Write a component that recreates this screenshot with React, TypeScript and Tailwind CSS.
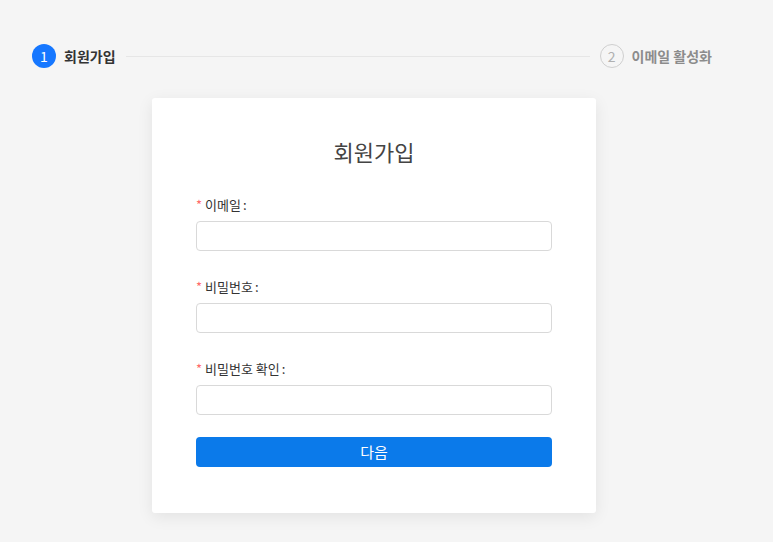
import React from "react";

const fields = [
  { label: "이메일", type: "email" },
  { label: "비밀번호", type: "password" },
  { label: "비밀번호 확인", type: "password" },
];

export default function App() {
  return (
    <div
      className="min-h-[542px] bg-[#f5f5f5] px-8 pt-11"
      style={{ fontFamily: '"Noto Sans CJK KR", "Noto Sans", sans-serif' }}
    >
      {/* steps */}
      <div className="flex items-center h-6">
        <div className="flex items-center flex-1">
          <div className="w-6 h-6 rounded-full bg-[#1677ff] text-white text-[14px] flex items-center justify-center leading-none">
            1
          </div>
          <span className="ml-2 text-[14px] font-bold text-[#333]">회원가입</span>
          <div className="flex-1 h-px bg-[#e6e6e6] mx-[10px]" />
        </div>
        <div className="flex items-center pr-[29px]">
          <div className="w-6 h-6 rounded-full border border-[#cfcfcf] text-[#b0b0b0] text-[14px] flex items-center justify-center leading-none">
            2
          </div>
          <span className="ml-2 text-[14px] font-bold text-[#8c8c8c]">이메일 활성화</span>
        </div>
      </div>

      {/* card */}
      <div className="mt-[30px] ml-[120px] w-[444px] h-[415px] bg-white rounded-[3px] shadow-[0_4px_16px_rgba(0,0,0,0.08)] px-11 pt-[36px]">
        <h1 className="text-center text-[22px] text-[#444] leading-[34px]">회원가입</h1>
        <div className="mt-[27px] flex flex-col gap-[26px]">
          {fields.map((f) => (
            <div key={f.label} className="flex flex-col">
              <label className="text-[13px] text-[#333] leading-[20px] mb-[6px]">
                <span className="text-[#ff6b6b] mr-[3px]">*</span>
                {f.label}
                <span className="ml-[2px]">:</span>
              </label>
              <input
                type={f.type}
                className="h-[30px] w-full border border-[#d9d9d9] rounded-[4px] bg-white px-3 outline-none"
              />
            </div>
          ))}
        </div>
        <button className="mt-[22px] w-full h-[30px] rounded-[4px] bg-[#0b7aea] text-white text-[15px]">
          다음
        </button>
      </div>
    </div>
  );
}
